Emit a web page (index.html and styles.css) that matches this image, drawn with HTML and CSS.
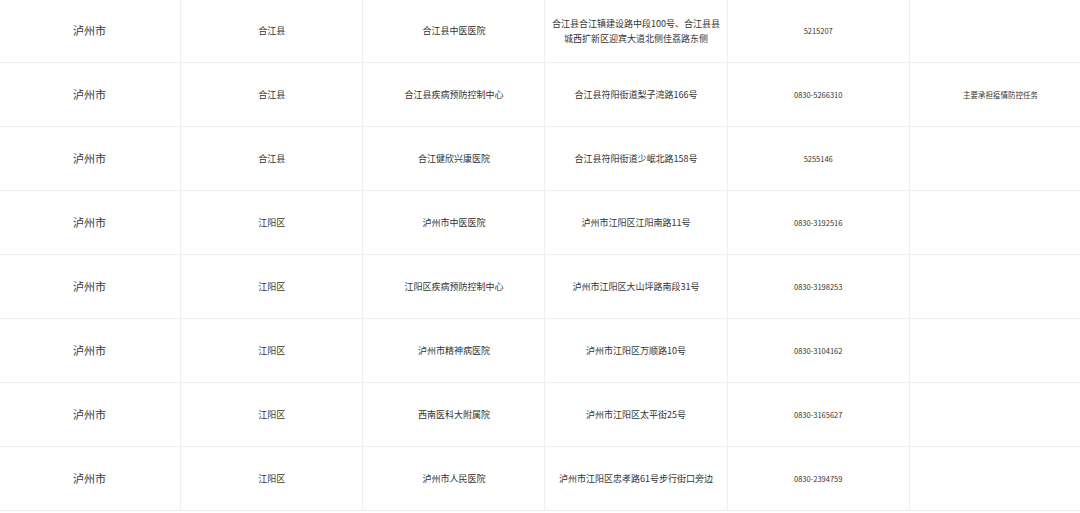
FILE: index.html
```html
<!DOCTYPE html>
<html lang="zh">
<head>
<meta charset="utf-8">
<link rel="stylesheet" href="styles.css">
</head>
<body>
<table class="grid">
  <colgroup>
    <col class="c"><col class="c"><col class="c"><col class="c"><col class="c"><col class="c">
  </colgroup>
  <tbody>
    <tr><td class="city">泸州市</td><td>合江县</td><td>合江县中医医院</td><td class="addr">合江县合江镇建设路中段100号、合江县县城西扩新区迎宾大道北侧佳荔路东侧</td><td class="small">5215207</td><td class="small"></td></tr>
    <tr><td class="city">泸州市</td><td>合江县</td><td>合江县疾病预防控制中心</td><td class="addr">合江县符阳街道梨子湾路166号</td><td class="small">0830-5266310</td><td class="small">主要承担疫情防控任务</td></tr>
    <tr><td class="city">泸州市</td><td>合江县</td><td>合江健欣兴康医院</td><td class="addr">合江县符阳街道少岷北路158号</td><td class="small">5255146</td><td class="small"></td></tr>
    <tr><td class="city">泸州市</td><td>江阳区</td><td>泸州市中医医院</td><td class="addr">泸州市江阳区江阳南路11号</td><td class="small">0830-3192516</td><td class="small"></td></tr>
    <tr><td class="city">泸州市</td><td>江阳区</td><td>江阳区疾病预防控制中心</td><td class="addr">泸州市江阳区大山坪路南段31号</td><td class="small">0830-3198253</td><td class="small"></td></tr>
    <tr><td class="city">泸州市</td><td>江阳区</td><td>泸州市精神病医院</td><td class="addr">泸州市江阳区万顺路10号</td><td class="small">0830-3104162</td><td class="small"></td></tr>
    <tr><td class="city">泸州市</td><td>江阳区</td><td>西南医科大附属院</td><td class="addr">泸州市江阳区太平街25号</td><td class="small">0830-3165627</td><td class="small"></td></tr>
    <tr><td class="city">泸州市</td><td>江阳区</td><td>泸州市人民医院</td><td class="addr">泸州市江阳区忠孝路61号步行街口旁边</td><td class="small">0830-2394759</td><td class="small"></td></tr>
  </tbody>
</table>
</body>
</html>
```

FILE: styles.css
```css
html, body {
  margin: 0;
  padding: 0;
  background: #ffffff;
  overflow: hidden;
}

.grid {
  border-collapse: collapse;
  table-layout: fixed;
  width: 1094px;
  margin: -2px 0 0 -2px;
  font-family: "Noto Sans CJK SC", "Noto Sans", sans-serif;
  color: #333333;
}

.grid .c {
  width: 182px;
}

.grid td {
  border: 1px solid #efefef;
  height: 64px;
  padding: 0 5px;
  box-sizing: border-box;
  text-align: center;
  vertical-align: middle;
  font-size: 9px;
  line-height: 15px;
}

.grid td.city {
  font-size: 11px;
}

.grid td.small {
  font-size: 7.5px;
}
```
